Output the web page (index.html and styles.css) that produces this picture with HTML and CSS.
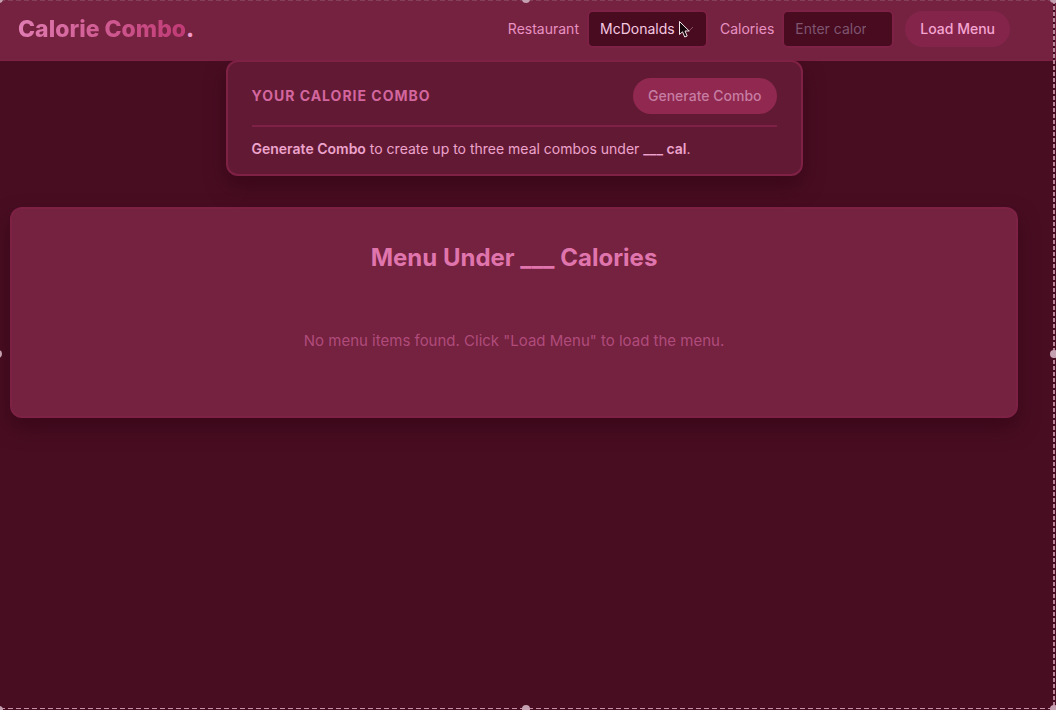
FILE: index.html
```html
<!DOCTYPE html>
<html lang="en">
<head>
<meta charset="utf-8">
<meta name="viewport" content="width=device-width, initial-scale=1">
<title>Calorie Combo</title>
<link rel="stylesheet" href="styles.css">
</head>
<body>
<header class="topbar">
  <h1 class="brand"><span class="brand-name">Calorie Combo</span>.</h1>
  <form class="controls">
    <label class="label" for="restaurant">Restaurant</label>
    <div class="select-wrap">
      <select class="field select" id="restaurant"><option>McDonalds</option></select>
      <svg class="chevron" viewBox="0 0 12 8" aria-hidden="true"><path d="M2 2l4 4 4-4"/></svg>
      <svg class="pointer" viewBox="0 0 13 19" aria-hidden="true"><path d="M1.5 1.5v13l3-2.7 2.2 5.2 2.5-1-2.2-5h4.2z"/></svg>
    </div>
    <label class="label" for="calories">Calories</label>
    <input class="field calories" id="calories" type="text" placeholder="Enter calories">
    <button class="button load" type="button">Load Menu</button>
  </form>
</header>
<main class="page">
  <section class="combo">
    <div class="combo-head">
      <h2 class="combo-title">Your Calorie Combo</h2>
      <button class="button generate" type="button">Generate Combo</button>
    </div>
    <p class="combo-text"><strong>Generate Combo</strong> to create up to three meal combos under <strong>___ cal</strong>.</p>
  </section>
  <section class="menu">
    <h2 class="menu-title">Menu Under ___ Calories</h2>
    <p class="menu-empty">No menu items found. Click "Load Menu" to load the menu.</p>
  </section>
</main>
<div class="frame" aria-hidden="true">
  <i class="edge edge-top"></i><i class="edge edge-right"></i><i class="edge edge-bottom"></i>
  <i class="handle nw"></i><i class="handle n"></i><i class="handle ne"></i>
  <i class="handle w"></i><i class="handle e"></i>
  <i class="handle sw"></i><i class="handle s"></i><i class="handle se"></i>
</div>
</body>
</html>
```

FILE: styles.css
```css
* {
  box-sizing: border-box;
}

body {
  margin: 0;
  min-height: 100vh;
  background: #480d21;
  color: #eda3cc;
  font-family: Inter, "Liberation Sans", sans-serif;
  font-size: 14px;
  line-height: 20px;
}

h1, h2, p {
  margin: 0;
}

.topbar {
  display: flex;
  align-items: center;
  justify-content: space-between;
  height: 61px;
  padding: 0 46px 3px 18px;
  background: #74223f;
  border-bottom: 1px solid #7d2145;
}

.brand {
  color: #f19acb;
  font-size: 23px;
  font-weight: 800;
  line-height: 32px;
}

.brand-name {
  background: linear-gradient(90deg, #e07db2, #c03a74);
  background-clip: text;
  -webkit-background-clip: text;
  color: transparent;
}

.controls {
  display: flex;
  align-items: center;
}

.label {
  margin-right: 8px;
  color: #e891c2;
}

.field {
  height: 38px;
  padding: 0 11px;
  border: 2px solid #7d2145;
  border-radius: 6px;
  background: #480b20;
  color: #f6c8e0;
  font: inherit;
}

.select-wrap {
  position: relative;
  width: 121px;
  margin-right: 12px;
}

.select {
  width: 100%;
  appearance: none;
}

.chevron {
  position: absolute;
  top: 15px;
  right: 13px;
  width: 12px;
  height: 8px;
  fill: none;
  stroke: #8b5068;
  stroke-width: 1;
}

.pointer {
  position: absolute;
  top: 10px;
  right: 17px;
  width: 13px;
  height: 19px;
  fill: #17080e;
  stroke: #f3e3ea;
  stroke-width: 1;
}

.calories {
  width: 112px;
  padding-right: 26px;
  margin-right: 11px;
}

.calories::placeholder {
  color: #7f5570;
  opacity: 1;
}

.button {
  height: 36px;
  padding: 0 15px;
  border: 0;
  border-radius: 18px;
  font: inherit;
  font-weight: 500;
}

.load {
  background: #84244b;
  color: #f5a5d1;
}

.page {
  padding: 0 38px 40px 10px;
}

.combo {
  position: relative;
  max-width: 577px;
  margin: -1px auto 31px;
  padding: 16px 24px 15px;
  border: 2px solid #7f2145;
  border-radius: 12px;
  background: #621a34;
  box-shadow: 0 10px 20px #3a0819;
  clip-path: inset(0 -40px -40px);
}

.combo-head {
  display: flex;
  align-items: center;
  justify-content: space-between;
  padding-bottom: 11px;
  margin-bottom: 12px;
  border-bottom: 2px solid #7f2146;
}

.combo-title {
  color: #d3669e;
  font-size: 14px;
  font-weight: 700;
  letter-spacing: 1px;
  text-transform: uppercase;
}

.generate {
  background: #91284f;
  color: #c77da3;
}

.combo-text strong {
  font-weight: 600;
}

.menu {
  padding: 33px 24px 61px;
  border: 2px solid #7d2145;
  border-radius: 12px;
  background: #74223f;
  box-shadow: 0 10px 20px #3a0819;
  text-align: center;
}

.menu-title {
  margin-bottom: 53px;
  color: #e075ae;
  font-size: 24px;
  font-weight: 700;
  line-height: 32px;
}

.menu-empty {
  color: #b04b7c;
  font-size: 15px;
  line-height: 28px;
}

.frame {
  position: fixed;
  inset: 0;
  overflow: hidden;
  pointer-events: none;
}

.edge {
  position: absolute;
}

.edge-top {
  top: 0;
  left: 0;
  right: 0;
  height: 1px;
  background: repeating-linear-gradient(90deg, #834059 0 5px, #74223f 5px 8px);
}

.edge-right {
  top: 0;
  bottom: 0;
  right: 1px;
  width: 2px;
  background: repeating-linear-gradient(#b78497 0 4px, #480d21 4px 6px);
}

.edge-bottom {
  left: 0;
  right: 0;
  bottom: 1px;
  height: 1px;
  background: repeating-linear-gradient(90deg, #c792a7 0 5px, #480d21 5px 8px);
}

.handle {
  position: absolute;
  width: 8px;
  height: 8px;
  border-radius: 50%;
  background: #c5a0b0;
}

.nw { top: -5px; left: -5px; }
.n { top: -5px; left: calc(50% - 6px); }
.ne { top: -5px; right: -2px; }
.w { top: calc(50% - 5px); left: -6px; }
.e { top: calc(50% - 5px); right: -2px; }
.sw { bottom: -4px; left: -5px; }
.s { bottom: -3px; left: calc(50% - 6px); }
.se { bottom: -3px; right: -2px; }
```
